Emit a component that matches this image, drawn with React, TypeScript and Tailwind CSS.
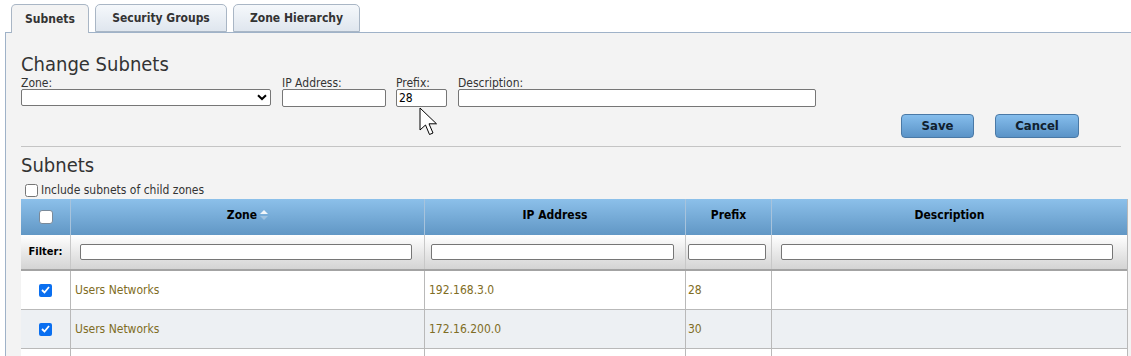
import { useState } from 'react';

const FONT = { fontFamily: '"DejaVu Sans Condensed", "Liberation Sans", sans-serif' };

interface SubnetRow {
  zone: string;
  ip: string;
  prefix: string;
  checked: boolean;
}

const rows: SubnetRow[] = [
  { zone: 'Users Networks', ip: '192.168.3.0', prefix: '28', checked: true },
  { zone: 'Users Networks', ip: '172.16.200.0', prefix: '30', checked: true },
  { zone: '', ip: '', prefix: '', checked: false },
];

const tabs = ['Subnets', 'Security Groups', 'Zone Hierarchy'];

const Cursor = () => (
  <svg width="22" height="30" viewBox="0 0 22 30" className="absolute left-[419px] top-[107px]">
    <path d="M1 1 L1 23 L6.5 18 L10.5 27.5 L14 26 L10 16.8 L17.5 16.8 Z" fill="#fff" stroke="#000" strokeWidth="1" strokeLinejoin="round" />
  </svg>
);

const Button = ({ label, w }: { label: string; w: string }) => (
  <button
    className={`${w} h-[24px] rounded-[4px] border border-[#4a79a6] bg-gradient-to-b from-[#85bdec] to-[#5a93c7] text-[13px] font-bold text-[#10202e]`}
  >
    {label}
  </button>
);

export default function App() {
  const [active, setActive] = useState(0);
  const [includeChild, setIncludeChild] = useState(false);

  return (
    <div className="relative h-[356px] w-[1131px] overflow-hidden bg-white text-[#333]" style={FONT}>
      {/* tabs */}
      <div className="flex h-[32px] items-end gap-[6px] pl-[11px]">
        {tabs.map((t, i) => (
          <div
            key={t}
            onClick={() => setActive(i)}
            className={`relative flex h-[28px] items-center justify-center rounded-t-[5px] border border-[#a9b6c5] text-[12px] font-bold ${
              i === active ? 'z-10 -mb-px h-[29px] border-b-0 bg-[#f3f3f3]' : 'bg-gradient-to-b from-[#f5f8fb] to-[#dfe6ee]'
            } ${i === 0 ? 'w-[78px]' : i === 1 ? 'w-[132px]' : 'w-[127px]'}`}
          >
            {t}
          </div>
        ))}
      </div>

      {/* panel */}
      <div className="ml-[5px] h-[324px] border-l border-t border-[#9fb2c8] bg-[#f3f3f3] pl-[15px] pr-[4px]">
        <h2 className="pt-[20px] text-[20px] leading-[23px] text-[#333]">Change Subnets</h2>

        <div className="mt-[1px] flex items-start text-[12px] leading-[13px]">
          <div className="flex w-[261px] flex-col">
            <label>Zone:</label>
            <div className="mt-[-1px] flex h-[17px] w-[250px] items-center justify-end rounded-[2px] border border-[#767676] bg-white pr-[3px]">
              <svg width="10" height="7" viewBox="0 0 10 7">
                <path d="M1 1.2 L5 5 L9 1.2" fill="none" stroke="#000" strokeWidth="2" />
              </svg>
            </div>
          </div>
          <div className="flex w-[114px] flex-col">
            <label>IP Address:</label>
            <div className="mt-[-1px] h-[18px] w-[104px] rounded-[2px] border border-[#767676] bg-white" />
          </div>
          <div className="flex w-[62px] flex-col">
            <label>Prefix:</label>
            <div className="mt-[-1px] flex h-[18px] w-[51px] items-center rounded-[2px] border border-[#767676] bg-white pl-[2px] text-[12px] text-black">
              28
            </div>
          </div>
          <div className="flex flex-col">
            <label>Description:</label>
            <div className="mt-[-1px] h-[18px] w-[358px] rounded-[2px] border border-[#767676] bg-white" />
          </div>
        </div>

        <div className="mt-[7px] flex gap-[21px] pl-[880px]">
          <Button label="Save" w="w-[73px]" />
          <Button label="Cancel" w="w-[84px]" />
        </div>

        <div className="mt-[8px] mr-[6px] border-t border-[#c4c4c4]" />

        <h2 className="pt-[7px] text-[20px] leading-[23px]">Subnets</h2>

        <label className="mt-[6px] flex items-center gap-[3px] pl-[4px] text-[12px] leading-[14px]">
          <input
            type="checkbox"
            checked={includeChild}
            onChange={(e) => setIncludeChild(e.target.checked)}
            className="m-0 h-[13px] w-[13px]"
          />
          Include subnets of child zones
        </label>

        {/* table */}
        <div className="mt-[2px] w-[1107px] border-r border-[#b9b9b9]">
          <div className="flex h-[36px] bg-gradient-to-b from-[#8cc0ea] to-[#6197c5] text-[12px] font-bold text-black">
            <div className="flex w-[50px] items-center justify-center border-r border-[#a7c3dc]">
              <span className="h-[14px] w-[14px] rounded-[3px] border border-[#7a8a9a] bg-white" />
            </div>
            <div className="flex w-[354px] items-center justify-center gap-[3px] border-r border-[#a7c3dc] pb-[5px]">
              Zone
              <svg width="8" height="12" viewBox="0 0 8 12">
                <path d="M0 5 L4 1 L8 5 Z" fill="#f2f6fa" />
                <path d="M0 7 L4 11 L8 7 Z" fill="#9fc2e0" />
              </svg>
            </div>
            <div className="flex w-[261px] items-center justify-center border-r border-[#a7c3dc] pb-[5px]">IP Address</div>
            <div className="flex w-[86px] items-center justify-center border-r border-[#a7c3dc] pb-[5px]">Prefix</div>
            <div className="flex flex-1 items-center justify-center pb-[5px]">Description</div>
          </div>

          <div className="flex h-[36px] border-b-2 border-[#a3a3a3] bg-gradient-to-b from-white to-[#d4d4d4] text-[11px] font-bold text-black">
            <div className="flex w-[50px] items-center justify-center border-r border-[#c8c8c8]">Filter:</div>
            <div className="flex w-[354px] items-center border-r border-[#c8c8c8] pl-[9px]">
              <div className="h-[16px] w-[332px] rounded-[2px] border border-[#767676] bg-white" />
            </div>
            <div className="flex w-[261px] items-center border-r border-[#c8c8c8] pl-[6px]">
              <div className="h-[16px] w-[243px] rounded-[2px] border border-[#767676] bg-white" />
            </div>
            <div className="flex w-[86px] items-center border-r border-[#c8c8c8] pl-[2px]">
              <div className="h-[16px] w-[78px] rounded-[2px] border border-[#767676] bg-white" />
            </div>
            <div className="flex flex-1 items-center pl-[9px]">
              <div className="h-[16px] w-[332px] rounded-[2px] border border-[#767676] bg-white" />
            </div>
          </div>

          {rows.map((r, i) => (
            <div
              key={i}
              className={`flex h-[39px] border-b border-[#b9b9b9] text-[12px] text-[#7f6d24] ${i % 2 === 1 ? 'bg-[#edf0f3]' : 'bg-white'}`}
            >
              <div className="flex w-[50px] items-center justify-center border-r border-[#b9b9b9]">
                {r.ip && (
                  <span className="flex h-[13px] w-[13px] items-center justify-center rounded-[2px] bg-[#0a6ff0]">
                    <svg width="9" height="8" viewBox="0 0 9 8">
                      <path d="M1 4 L3.5 6.5 L8 1" fill="none" stroke="#fff" strokeWidth="1.8" />
                    </svg>
                  </span>
                )}
              </div>
              <div className="flex w-[354px] items-center border-r border-[#b9b9b9] pl-[4px]">{r.zone}</div>
              <div className="flex w-[261px] items-center border-r border-[#b9b9b9] pl-[4px]">{r.ip}</div>
              <div className="flex w-[86px] items-center border-r border-[#b9b9b9] pl-[2px]">{r.prefix}</div>
              <div className="flex flex-1 items-center" />
            </div>
          ))}
        </div>
      </div>

      <Cursor />
    </div>
  );
}
